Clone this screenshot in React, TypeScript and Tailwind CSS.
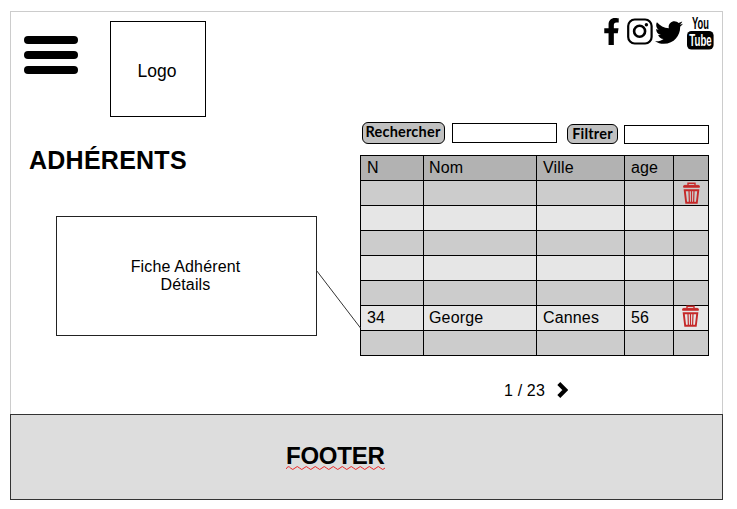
import React from "react";
import { FaFacebookF, FaTwitter } from "react-icons/fa";

const rows: string[][] = [
  ["", "", "", "", "trash"],
  ["", "", "", "", ""],
  ["", "", "", "", ""],
  ["", "", "", "", ""],
  ["", "", "", "", ""],
  ["34", "George", "Cannes", "56", "trash"],
  ["", "", "", "", ""],
];

function TrashIcon({ className }: { className: string }) {
  return (
    <svg viewBox="0 0 17 22" className={className} fill="none" stroke="#c52828">
      <path d="M5 3V1.2h7V3" strokeWidth="1.4" />
      <path d="M0.5 5.2V4.4Q0.5 3.4 1.8 3.4H15.2Q16.5 3.4 16.5 4.4V5.2Z" fill="#c52828" strokeWidth="1" />
      <path d="M1.7 8.2H15.3L13.8 20.8H3.2Z" strokeWidth="1.9" />
      <path d="M6 8.5L6.4 20.5M8.5 8.5V20.5M11 8.5L10.6 20.5" strokeWidth="1.2" />
    </svg>
  );
}

function InstagramIcon() {
  return (
    <svg viewBox="0 0 26 27" className="ml-[7px] mt-[6px] h-[27px] w-[26px]" fill="none" stroke="#000">
      <rect x="1.2" y="1.5" width="23.4" height="24" rx="6.5" strokeWidth="2.2" />
      <circle cx="12.6" cy="13.3" r="5.5" strokeWidth="2.6" />
      <circle cx="19.4" cy="6.7" r="1.7" fill="#000" stroke="none" />
    </svg>
  );
}

function YoutubeIcon() {
  return (
    <svg viewBox="0 0 28 40" className="ml-[3px] mt-px h-[40px] w-[28px] overflow-visible">
      <text transform="translate(14.5 16) scale(0.85 1.55)" textAnchor="middle" className="font-['Liberation_Sans'] text-[11px] font-bold" fill="#000">You</text>
      <rect x="1" y="18" width="26.6" height="18.5" rx="4.5" fill="#000" />
      <text transform="translate(14.5 33.3) scale(0.88 1.55)" textAnchor="middle" className="font-['Liberation_Sans'] text-[11px] font-bold" fill="#fff">Tube</text>
    </svg>
  );
}

function Header() {
  return (
    <header className="flex h-[108px] items-start">
      <div className="ml-[13px] mt-[24px] flex w-[54px] flex-col gap-[7px]">
        <span className="h-[8px] rounded-full bg-black" />
        <span className="h-[8px] rounded-full bg-black" />
        <span className="h-[8px] rounded-full bg-black" />
      </div>
      <div className="ml-[32px] mt-[9px] flex h-[96px] w-[96px] items-center justify-center border border-black pr-[2px] pt-[5px] text-[17.5px]">
        Logo
      </div>
      <div className="ml-auto mr-[8px] flex items-start">
        <FaFacebookF className="mt-[6px] h-[27px] w-[17px]" />
        <InstagramIcon />
        <FaTwitter className="ml-[2px] mt-[6px] h-[29px] w-[28px]" />
        <YoutubeIcon />
      </div>
    </header>
  );
}

function MemberTable() {
  return (
    <div className="mt-[11px] grid w-[349px] grid-cols-[63px_113px_88px_49px_35px] border-l border-t border-black text-[16px] leading-[24px] tracking-[0.15px]">
      {["N", "Nom", "Ville", "age", ""].map((title, i) => (
        <div key={i} className={`h-[25px] border-b border-r border-black bg-[#b2b2b2] ${i === 1 ? "pl-[5px]" : "pl-[6px]"}`}>
          {title}
        </div>
      ))}
      {rows.map((row, r) =>
        row.map((cell, c) => (
          <div
            key={`${r}-${c}`}
            className={`h-[25px] border-b border-r border-black ${r % 2 === 0 ? "bg-[#cccccc]" : "bg-[#e6e6e6]"} ${c === 4 ? "" : c === 1 ? "pl-[5px]" : "pl-[6px]"}`}
          >
            {cell === "trash" ? (
              <TrashIcon className={r === 0 ? "ml-[9px] mt-px h-[22px] w-[17px]" : "-mt-px ml-[8px] h-[22px] w-[17px]"} />
            ) : (
              cell
            )}
          </div>
        ))
      )}
    </div>
  );
}

function ControlButton({ label, className }: { label: string; className: string }) {
  return (
    <button className={`flex items-center justify-center whitespace-nowrap rounded-[6px] border border-black bg-[#c0c0c0] font-['Lato'] font-bold ${className}`}>
      {label}
    </button>
  );
}

export default function App() {
  return (
    <div className="h-[509px] w-[737px] bg-white pl-[10px] pt-[11px] font-['Liberation_Sans',sans-serif] text-black">
      <div className="flex h-[489px] w-[713px] flex-col">
        <div className="flex h-[403px] flex-col border-x border-t border-[#cccccc]">
          <Header />
          <main className="flex">
            <section className="relative w-[349px]">
              <h1 className="ml-[18px] mt-[26px] text-[25px] font-bold leading-[28px] tracking-[0.25px]">ADHÉRENTS</h1>
              <div className="ml-[45px] mt-[42px] flex h-[120px] w-[261px] items-center justify-center border border-[#222] pr-[2px] text-center text-[16px] leading-[18px] tracking-[0.15px]">
                <p>Fiche Adhérent<br />Détails</p>
              </div>
              <svg className="absolute left-[305px] top-[150px] h-[59px] w-[45px]" viewBox="0 0 45 59">
                <path d="M0.5 0.5L44.5 58" stroke="#333" strokeWidth="1" />
              </svg>
            </section>
            <section className="w-[349px]">
              <div className="flex h-[24px] items-start">
                <ControlButton label="Rechercher" className="ml-[2px] mt-[2px] h-[22px] w-[83px] pb-[3px] pr-px text-[14.5px] tracking-[0.2px]" />
                <input aria-label="Rechercher" className="ml-[7px] mt-[3px] h-[20px] w-[105px] border border-black bg-white" />
                <ControlButton label="Filtrer" className="ml-[10px] mt-[4px] h-[20px] w-[51px] pb-px text-[14.5px] tracking-[0.2px]" />
                <input aria-label="Filtrer" className="ml-[6px] mt-[5px] h-[19px] w-[85px] border border-black bg-white" />
              </div>
              <MemberTable />
              <div className="ml-[144px] mt-[24px] flex h-[20px] items-center text-[16px]">
                <span className="pt-px tracking-[0.15px]">1 / 23</span>
                <svg viewBox="0 0 11 16" className="ml-[12px] h-[16px] w-[11px]" fill="none" stroke="#000">
                  <path d="M1.8 1.5L8.3 8L1.8 14.5" strokeWidth="4.2" />
                </svg>
              </div>
            </section>
          </main>
        </div>
        <footer className="flex h-[86px] border border-[#333] bg-[#dddddd]">
          <div className="ml-[275px] mt-[27px] h-[30px] w-[100px]">
            <p className="text-[24px] font-bold leading-[28px] tracking-[-0.25px]">FOOTER</p>
            <svg viewBox="0 0 99 4" className="-mt-[4px] h-[4px] w-[99px]" fill="none" stroke="#e11">
              <path d="M0 3q2.25 -4 4.5 -1t4.5 0t4.5 0t4.5 0t4.5 0t4.5 0t4.5 0t4.5 0t4.5 0t4.5 0t4.5 0t4.5 0t4.5 0t4.5 0t4.5 0t4.5 0t4.5 0t4.5 0t4.5 0t4.5 0t4.5 0t4.5 0" strokeWidth="0.9" />
            </svg>
          </div>
        </footer>
      </div>
    </div>
  );
}
